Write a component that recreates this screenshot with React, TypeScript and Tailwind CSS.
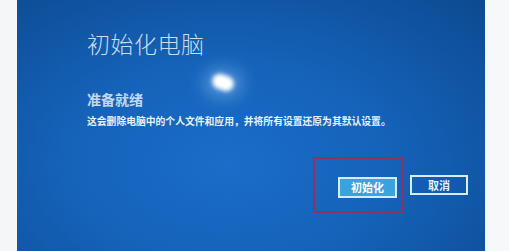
import React from 'react';

const font = { fontFamily: '"Noto Sans CJK SC", "Noto Sans", sans-serif' };

export default function App() {
  return (
    <div className="w-[509px] h-[251px] bg-white flex overflow-hidden" style={font}>
      <div className="w-[17px] shrink-0 bg-[#f4f6f8]" />
      <div className="relative w-[468px] h-full shrink-0 bg-[radial-gradient(ellipse_at_45%_65%,#1a6dc8_0%,#1562b9_45%,#0c4a90_100%)] pl-[70px] pr-[17px] pt-[29px]">
        {/* glare from the photo */}
        <div className="absolute left-[186px] top-[68px] w-[40px] h-[30px] rounded-full bg-[#7fbaf0] blur-[8px] opacity-50" />
        <div className="absolute left-[195px] top-[75px] w-[22px] h-[15px] rounded-full bg-white blur-[2px] rotate-[20deg]" />

        <h1 className="text-[23px] leading-[28px] font-light text-[#c9dcf1] tracking-[0.5px]">初始化电脑</h1>
        <h2 className="mt-[33px] text-[14px] leading-[18px] font-bold text-[#c2d6ee]">准备就绪</h2>
        <p className="mt-[7px] text-[9.8px] leading-[12px] font-bold text-[#e8f0fa] whitespace-nowrap">
          这会删除电脑中的个人文件和应用，并将所有设置还原为其默认设置。
        </p>

        <div className="mt-[30px] flex items-center justify-end gap-[6px]">
          <div className="border-2 border-[#8a3560] pl-[23px] pr-[5px] pt-[14px] pb-[13px]">
            <button className="w-[59px] h-[21px] bg-[#3aa2de] border-[2px] border-[#d6ebf8] text-white text-[11px] font-bold leading-none">
              初始化
            </button>
          </div>
          <button className="w-[58px] h-[20px] border-[2px] border-[#dbeaf7] text-[#e6f0fa] text-[11px] font-bold leading-none">
            取消
          </button>
        </div>
      </div>
      <div className="flex-1 bg-[#f7f8fa]" />
    </div>
  );
}
